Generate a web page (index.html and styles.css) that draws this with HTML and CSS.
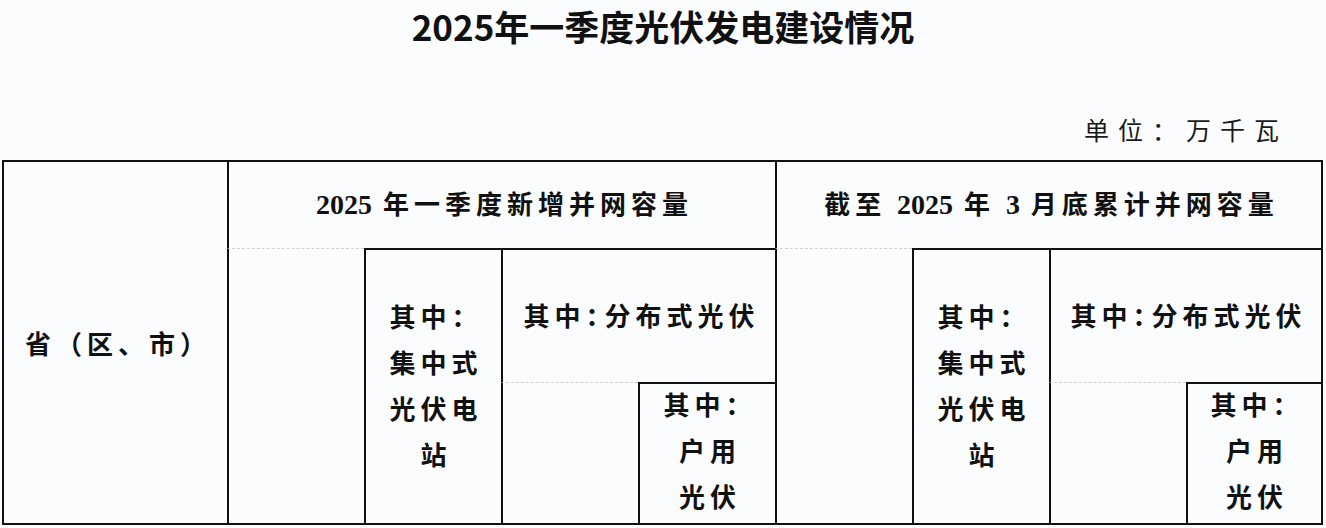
FILE: index.html
```html
<!DOCTYPE html>
<html lang="zh-CN">
<head>
<meta charset="utf-8">
<title>2025年一季度光伏发电建设情况</title>
<link rel="stylesheet" href="styles.css">
</head>
<body>
<h1 class="title">2025年一季度光伏发电建设情况</h1>
<div class="unit">单位：万千瓦</div>
<div class="grid">
  <div class="cell c-prov"><p class="txt">省（区、市）</p></div>
  <div class="cell c-h1"><p class="txt"><span class="num">2025</span> 年一季度新增并网容量</p></div>
  <div class="cell blank c-b1"></div>
  <div class="cell multi c-c1"><p class="txt">其中：<br>集中式<br>光伏电<br>站</p></div>
  <div class="cell c-d1"><p class="txt">其中<span class="colon">：</span>分布式光伏</p></div>
  <div class="cell blank c-b2"></div>
  <div class="cell multi c-e1"><p class="txt">其中：<br>户用<br>光伏</p></div>
  <div class="cell c-h2"><p class="txt">截至 <span class="num">2025</span> 年 <span class="num">3</span> 月底累计并网容量</p></div>
  <div class="cell blank c-b3"></div>
  <div class="cell multi c-c2"><p class="txt">其中：<br>集中式<br>光伏电<br>站</p></div>
  <div class="cell c-d2"><p class="txt">其中<span class="colon">：</span>分布式光伏</p></div>
  <div class="cell blank c-b4"></div>
  <div class="cell multi c-e2"><p class="txt">其中：<br>户用<br>光伏</p></div>
</div>
</body>
</html>
```
FILE: styles.css
```css
html, body {
  margin: 0;
  padding: 0;
  background: #fafcfd;
  color: #111;
}

.title {
  margin: 0;
  height: 54px;
  line-height: 52px;
  text-align: center;
  font-family: "Noto Sans CJK SC", sans-serif;
  font-weight: 700;
  font-size: 35px;
}

.unit {
  margin-top: 62px;
  height: 32px;
  line-height: 32px;
  padding-right: 38px;
  text-align: right;
  font-family: "Liberation Serif", "Noto Sans CJK SC", serif;
  font-size: 25px;
  letter-spacing: 9px;
  color: #1a1a1a;
}

.grid {
  margin: 12px 0 0 2px;
  display: grid;
  grid-template-columns: 225px 137px 137px 137px 137px 137px 137px 137px 135px;
  grid-template-rows: 88px 134px 141px;
  width: max-content;
  border-right: 2px solid #111;
  border-bottom: 2px solid #111;
  font-family: "Noto Sans CJK SC", serif;
  font-weight: 700;
  font-size: 26px;
  letter-spacing: 5px;
}

.txt {
  margin: 0;
  text-align: center;
  white-space: nowrap;
}

.num {
  font-family: "Liberation Serif", serif;
  font-weight: 700;
  font-size: 28px;
  letter-spacing: 0;
}

.colon {
  font-feature-settings: "halt";
  letter-spacing: 6px;
}

.cell {
  box-sizing: border-box;
  border-top: 2px solid #111;
  border-left: 2px solid #111;
  display: flex;
  align-items: center;
  justify-content: center;
  padding-left: 5px;
}

.cell.blank {
  border-top: 1px dashed #cfd3d6;
}

.cell.multi {
  line-height: 46px;
}

.c-prov { grid-column: 1; grid-row: 1 / 4; }
.c-h1 { grid-column: 2 / 6; grid-row: 1; padding-bottom: 6px; }
.c-b1 { grid-column: 2; grid-row: 2 / 4; }
.c-c1 { grid-column: 3; grid-row: 2 / 4; padding-bottom: 3px; }
.c-d1 { grid-column: 4 / 6; grid-row: 2; padding-bottom: 4px; }
.c-b2 { grid-column: 4; grid-row: 3; }
.c-e1 { grid-column: 5; grid-row: 3; padding-bottom: 8px; }
.c-h2 { grid-column: 6 / 10; grid-row: 1; padding-bottom: 6px; }
.c-b3 { grid-column: 6; grid-row: 2 / 4; }
.c-c2 { grid-column: 7; grid-row: 2 / 4; padding-bottom: 3px; }
.c-d2 { grid-column: 8 / 10; grid-row: 2; padding-bottom: 4px; }
.c-b4 { grid-column: 8; grid-row: 3; }
.c-e2 { grid-column: 9; grid-row: 3; padding-bottom: 8px; }
```
